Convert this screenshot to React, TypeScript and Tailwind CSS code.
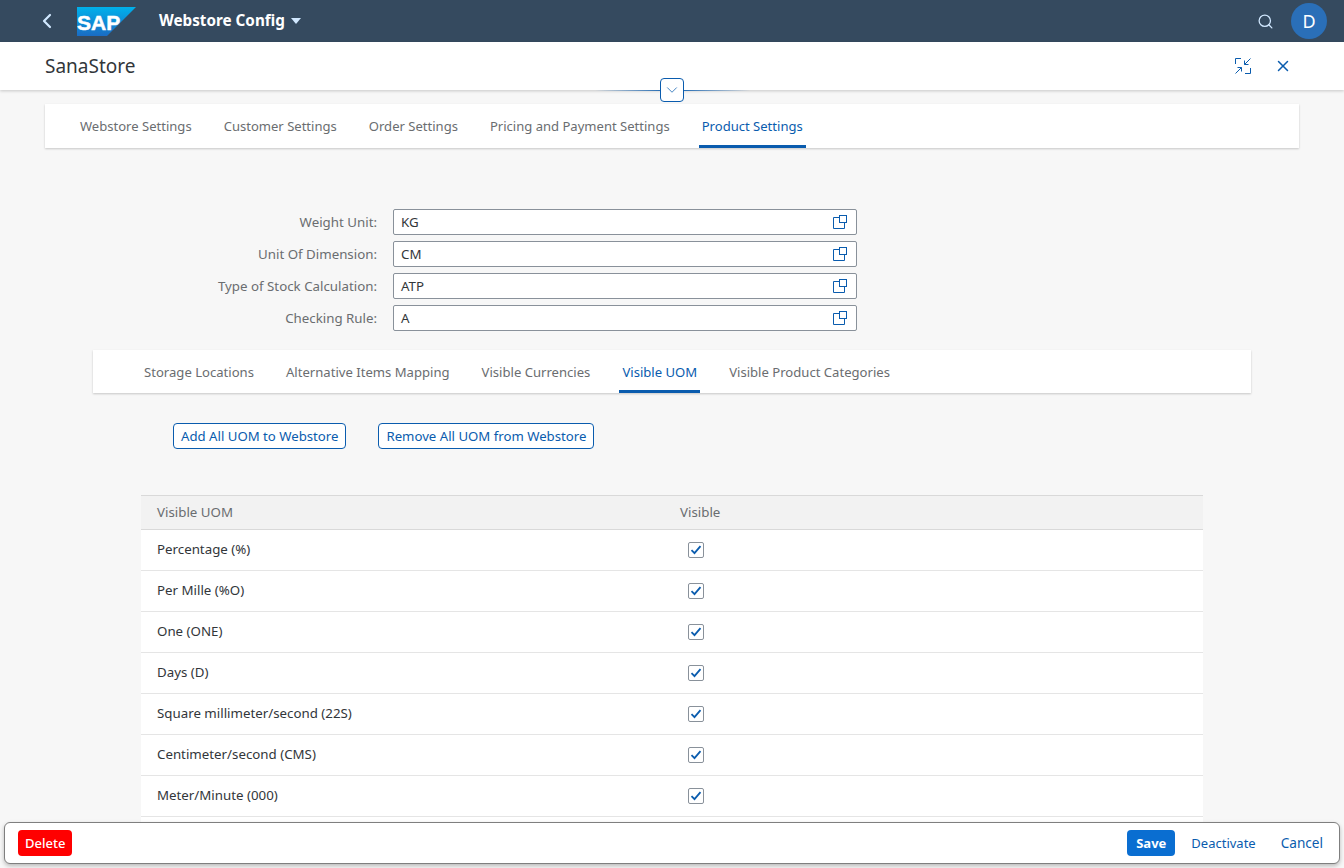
import { ChevronDown, ChevronLeft, Search, X } from 'lucide-react';

const mainTabs = ['Webstore Settings', 'Customer Settings', 'Order Settings', 'Pricing and Payment Settings', 'Product Settings'];
const subTabs = ['Storage Locations', 'Alternative Items Mapping', 'Visible Currencies', 'Visible UOM', 'Visible Product Categories'];
const fields = [
  { label: 'Weight Unit:', value: 'KG' },
  { label: 'Unit Of Dimension:', value: 'CM' },
  { label: 'Type of Stock Calculation:', value: 'ATP' },
  { label: 'Checking Rule:', value: 'A' },
];
const rows = [
  'Percentage (%)',
  'Per Mille (%O)',
  'One (ONE)',
  'Days (D)',
  'Square millimeter/second (22S)',
  'Centimeter/second (CMS)',
  'Meter/Minute (000)',
  'Meter/Hour (M/H)',
];

function SapLogo() {
  return (
    <svg width="59" height="29" viewBox="0 0 59 29" className="shrink-0">
      <defs>
        <linearGradient id="sap" x1="0" y1="0" x2="0" y2="1">
          <stop offset="0" stopColor="#00b1eb" />
          <stop offset="1" stopColor="#1a6cc4" />
        </linearGradient>
      </defs>
      <polygon points="0,0 59,0 30,29 0,29" fill="url(#sap)" />
      <text x="0" y="23" fill="#fff" stroke="#fff" strokeWidth="0.5" fontFamily="Liberation Sans" fontWeight="700" fontSize="21">SAP</text>
    </svg>
  );
}

function ExitFullIcon() {
  return (
    <svg width="18" height="18" viewBox="0 0 18 18" fill="none" stroke="#0a5cae" strokeWidth="1">
      <path d="M1.5 7V1.5H7" />
      <path d="M16.5 11v5.5H11" />
      <path d="M10.5 7.5l6-6M10.5 3.5v4h4" />
      <path d="M7.5 10.5l-6 6M3.5 10.5h4v4" />
    </svg>
  );
}

function ValueHelpIcon() {
  return (
    <svg width="14" height="14" viewBox="0 0 14 14" fill="none" stroke="#0a5cae" strokeWidth="1">
      <path d="M6 2.5H0.5V13.5H11.5V8" />
      <rect x="6.5" y="0.5" width="7" height="7" />
    </svg>
  );
}

function Tabs({ items, active, className }: { items: string[]; active: string; className: string }) {
  return (
    <div className={`flex bg-white gap-[26px] shadow-[0_1px_2px_rgba(0,0,0,0.2)] ${className}`}>
      {items.map((t) => (
        <div
          key={t}
          className={`flex items-center px-[3px] border-b-[3px] pt-[5px] ${
            t === active ? 'border-[#0a5cae] text-[#0a5cae]' : 'border-transparent text-[#6a6d70]'
          }`}
        >
          {t}
        </div>
      ))}
    </div>
  );
}

export default function App() {
  return (
    <div className="relative flex flex-col h-screen overflow-hidden bg-[#f7f7f7] font-['Noto_Sans',sans-serif] text-[#32363a]">
      <header className="flex items-center h-[42px] shrink-0 bg-[#354a5f] pl-[35px] pr-[17px]">
        <ChevronLeft size={24} strokeWidth={2.2} className="text-[#d1e8ff]" />
        <div className="ml-[18px]"><SapLogo /></div>
        <div className="ml-[23px] -mt-[2px] text-white font-bold text-[15.25px]">Webstore Config</div>
        <svg width="10" height="6" viewBox="0 0 10 6" className="ml-[6px]"><path d="M0 0h10L5 6z" fill="#d1e8ff" /></svg>
        <Search size={17} strokeWidth={1.8} className="ml-auto text-[#d1e8ff]" />
        <div className="ml-[17px] flex items-center justify-center w-9 h-9 rounded-full bg-[#2a6fb8] text-white text-lg">D</div>
      </header>

      <div className="flex items-center h-[48px] shrink-0 bg-white pl-[45px] pr-[52px] shadow-[0_1px_3px_rgba(0,0,0,0.2)] z-10">
        <div className="text-[19px]">SanaStore</div>
        <div className="ml-auto"><ExitFullIcon /></div>
        <X size={18} strokeWidth={2} className="ml-[22px] text-[#0a5cae]" />
      </div>

      {/* header collapse toggle */}
      <div className="absolute z-20 left-[595px] top-[78px] w-[155px] h-6 flex items-center justify-center">
        <div className="absolute left-0 right-0 top-3 h-px bg-gradient-to-r from-transparent via-[#0a5cae] to-transparent" />
        <div className="relative -ml-[1px] flex items-center justify-center w-6 h-6 rounded bg-white border border-[#0a5cae]">
          <ChevronDown size={18} strokeWidth={1} className="text-[#0a5cae]" />
        </div>
      </div>

      <main className="flex flex-col flex-1 min-h-0 pt-[14px]">
        <Tabs items={mainTabs} active="Product Settings" className="h-[44px] mx-[45px] pl-[32px] shrink-0 text-[13.05px]" />

        <div className="flex flex-col gap-[6px] mt-[61px] shrink-0 text-[13.3px]">
          {fields.map((f) => (
            <div key={f.label} className="flex items-center">
              <label className="w-[377px] pt-px text-right text-[#6a6d70]">{f.label}</label>
              <div className="ml-4 flex items-center justify-between w-[464px] h-[26px] bg-white border border-[#89919a] rounded-[2px] pl-[7px] pr-[9px]">
                <span className="pt-px">{f.value}</span>
                <ValueHelpIcon />
              </div>
            </div>
          ))}
        </div>

        <Tabs items={subTabs} active="Visible UOM" className="h-[43px] mt-[19px] mx-[93px] pl-[48px] shrink-0 text-[13.1px]" />

        <div className="flex gap-8 mt-[30px] ml-[173px] shrink-0">
          <button className="h-[26px] px-[7px] pt-px text-[13.2px] text-[#0a5cae] bg-white border border-[#0a5cae] rounded-[4px]">Add All UOM to Webstore</button>
          <button className="h-[26px] px-[7px] pt-px text-[13.2px] text-[#0a5cae] bg-white border border-[#0a5cae] rounded-[4px]">Remove All UOM from Webstore</button>
        </div>

        <div className="mt-[46px] mx-[141px] w-[1062px] shrink-0 text-[13.3px]">
          <div className="grid grid-cols-[523px_1fr] items-center h-[35px] bg-[#f2f2f2] border-y border-[#d9d9d9] pl-4 text-[#6a6d70]">
            <div>Visible UOM</div>
            <div>Visible</div>
          </div>
          {rows.map((r) => (
            <div key={r} className="grid grid-cols-[531px_1fr] items-center h-[41px] bg-white border-b border-[#e5e5e5] pl-4">
              <div>{r}</div>
              <div className="flex items-center justify-center w-4 h-4 bg-white border border-[#89919a] rounded-[2px]">
                <svg width="12" height="10" viewBox="0 0 12 10" fill="none" stroke="#0a5cae" strokeWidth="1.8"><path d="M1.5 5.2L4.5 8.2L10.5 1.2" /></svg>
              </div>
            </div>
          ))}
        </div>
      </main>

      <footer className="absolute left-1 right-1 bottom-1 flex items-center h-[42px] bg-white border border-[#7f7f7f] rounded-md shadow-[0_2px_4px_rgba(0,0,0,0.25)] pl-[13px] pr-4 text-[13px]">
        <button className="h-[26px] px-[7px] pt-px rounded-[4px] bg-[#ff0000] text-white font-medium">Delete</button>
        <button className="ml-auto h-[26px] px-[9px] pt-px rounded-[4px] bg-[#0a6ed1] text-white font-bold">Save</button>
        <button className="ml-4 pt-px text-[#0a5cae]">Deactivate</button>
        <button className="ml-[25px] pt-px text-[13.6px] text-[#0a5cae]">Cancel</button>
      </footer>
    </div>
  );
}
